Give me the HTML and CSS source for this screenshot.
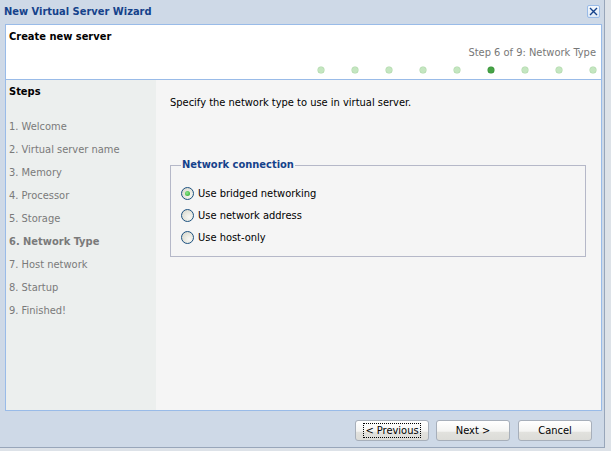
FILE: index.html
```html
<!DOCTYPE html>
<html>
<head>
<meta charset="utf-8">
<link rel="stylesheet" href="styles.css">
</head>
<body>
<div class="window">
  <div class="titlebar">
    <span class="title">New Virtual Server Wizard</span>
    <span class="close"><svg width="9" height="9" viewBox="0 0 9 9"><path d="M1 1 L8 8 M8 1 L1 8" stroke="#15428b" stroke-width="1.4" fill="none"/></svg></span>
  </div>
  <div class="frame">
    <div class="header">
      <div class="h-title">Create new server</div>
      <div class="h-step">Step 6 of 9: Network Type</div>
      <div class="dots">
        <span class="dot"></span><span class="dot"></span><span class="dot"></span><span class="dot"></span><span class="dot"></span><span class="dot active"></span><span class="dot"></span><span class="dot"></span><span class="dot"></span>
      </div>
    </div>
    <div class="body">
      <div class="steps">
        <div class="steps-title">Steps</div>
        <ul class="step-list">
          <li>1. Welcome</li>
          <li>2. Virtual server name</li>
          <li>3. Memory</li>
          <li>4. Processor</li>
          <li>5. Storage</li>
          <li class="current">6. Network Type</li>
          <li>7. Host network</li>
          <li>8. Startup</li>
          <li>9. Finished!</li>
        </ul>
      </div>
      <div class="content">
        <p class="intro">Specify the network type to use in virtual server.</p>
        <fieldset class="group">
          <legend>Network connection</legend>
          <div class="radio-row"><span class="radio checked"></span><span>Use bridged networking</span></div>
          <div class="radio-row"><span class="radio"></span><span>Use network address</span></div>
          <div class="radio-row"><span class="radio"></span><span>Use host-only</span></div>
        </fieldset>
      </div>
    </div>
  </div>
  <div class="footer">
    <button class="btn"><span class="focus">&lt; Previous</span></button>
    <button class="btn">Next &gt;</button>
    <button class="btn">Cancel</button>
  </div>
</div>
</body>
</html>
```
FILE: styles.css
```css
html, body {
  margin: 0;
  padding: 0;
}
body {
  background: #dde2e8;
  width: 611px;
  height: 451px;
  overflow: hidden;
  font-family: "DejaVu Sans Condensed", "Liberation Sans", sans-serif;
  font-size: 11px;
}
.window {
  width: 605px;
  height: 448px;
  background: #ced9e7;
  border-right: 1px solid #98a6ba;
  border-bottom: 1px solid #98a6ba;
  box-sizing: border-box;
  display: flex;
  flex-direction: column;
}
.titlebar {
  height: 24px;
  display: flex;
  align-items: center;
  justify-content: space-between;
  padding: 0 4px 0 4px;
  box-sizing: border-box;
}
.title {
  font-weight: bold;
  color: #15428b;
  font-size: 11px;
  margin-top: -1px;
}
.close {
  width: 13px;
  height: 13px;
  box-sizing: border-box;
  border: 1px solid #99bbe8;
  border-radius: 2px;
  background: linear-gradient(#f4f8fd, #dde8f5);
  display: flex;
  align-items: center;
  justify-content: center;
  margin-top: -1px;
}
.frame {
  margin: 0 2px 0 5px;
  border: 1px solid #99bbe8;
  display: flex;
  flex-direction: column;
}
.header {
  background: #fff;
  height: 54px;
  border-bottom: 1px solid #99bbe8;
  padding: 0 5px 0 3px;
}
.h-title {
  font-weight: bold;
  color: #000;
  line-height: 14px;
  margin-top: 5px;
}
.h-step {
  color: #777;
  text-align: right;
  line-height: 14px;
  margin-top: 2px;
}
.dots {
  display: flex;
  justify-content: flex-end;
  gap: 28px;
  margin-top: 7px;
}
.dot {
  width: 6px;
  height: 6px;
  border-radius: 50%;
  background: #c4e6c0;
  box-shadow: 0 0 0 0.5px #a8d4a2;
}
.dot.active {
  background: #46a346;
  box-shadow: 0 0 0 0.5px #2f8a2f;
}
.body {
  display: flex;
  height: 330px;
}
.steps {
  width: 150px;
  background: #ecefee;
  padding: 5px 0 0 3px;
  box-sizing: border-box;
}
.steps-title {
  font-weight: bold;
  color: #000;
  line-height: 14px;
}
.step-list {
  list-style: none;
  margin: 16px 0 0 0;
  padding: 0;
}
.step-list li {
  line-height: 23px;
  color: #7a7a7a;
}
.step-list li.current {
  font-weight: bold;
}
.content {
  flex: 1;
  background: #f5f5f5;
  padding: 16px 15px 0 14px;
}
.intro {
  margin: 0;
  line-height: 14px;
  color: #000;
}
.group {
  margin: 48px 0 0 0;
  width: 416px;
  box-sizing: border-box;
  border: 1px solid #b5b8c8;
  padding: 10px 10px 8px 10px;
}
.group legend {
  font-weight: bold;
  color: #15428b;
  padding: 0 1px;
  line-height: 14px;
}
.radio-row {
  display: flex;
  align-items: center;
  height: 22px;
  color: #000;
}
.radio {
  width: 13px;
  height: 13px;
  box-sizing: border-box;
  border-radius: 50%;
  border: 1px solid #1c5180;
  background: radial-gradient(circle at 65% 65%, #f8f8f5 0, #e8e8e0 45%, #d2d2c8 100%);
  margin: 0 4px 0 0;
  position: relative;
}
.radio.checked::after {
  content: "";
  position: absolute;
  left: 3px;
  top: 3px;
  width: 5px;
  height: 5px;
  border-radius: 50%;
  background: radial-gradient(circle at 40% 40%, #8ee88e, #21a121);
}
.footer {
  flex: 1;
  display: flex;
  justify-content: flex-end;
  align-items: flex-start;
  padding: 9px 12px 0 0;
  gap: 7px;
}
.btn {
  width: 74px;
  height: 21px;
  box-sizing: border-box;
  font-family: inherit;
  font-size: 11px;
  color: #000;
  border: 1px solid #a7afba;
  border-radius: 3px;
  background: linear-gradient(#ffffff 0%, #f4f4f2 55%, #e2e2de 56%, #dcdcd8 100%);
  padding: 0;
  margin: 0;
  display: flex;
  align-items: center;
  justify-content: center;
}
.btn:last-child {
  margin-left: 1px;
}
.focus {
  border: 1px dotted #000;
  padding: 0 1px;
  line-height: 13px;
}
```
